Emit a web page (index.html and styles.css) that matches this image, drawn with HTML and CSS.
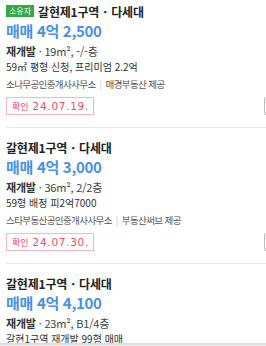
FILE: index.html
```html
<!DOCTYPE html>
<html lang="ko">
<head>
    <meta charset="UTF-8">
    <meta name="viewport" content="width=device-width, initial-scale=1.0">
    <title>매물 목록</title>
    <link rel="stylesheet" href="styles.css">
</head>
<body>
    <ul class="list">
        <li class="item">
            <div class="title"><span class="badge">소유자</span>갈현제1구역 · 다세대</div>
            <div class="price">매매 4억 2,500</div>
            <div class="info"><strong>재개발</strong> · 19m², -/-층</div>
            <div class="desc">59㎡ 평형 신청, 프리미엄 2.2억</div>
            <div class="agency">소나무공인중개사사무소<span class="bar">|</span>매경부동산 제공</div>
            <div class="bottom">
                <span class="confirm"><em>확인</em> 24.07.19.</span>
                <button class="more" aria-label="더보기"></button>
            </div>
        </li>
        <li class="item">
            <div class="title">갈현제1구역 · 다세대</div>
            <div class="price">매매 4억 3,000</div>
            <div class="info"><strong>재개발</strong> · 36m², 2/2층</div>
            <div class="desc">59형 배정 피2억7000</div>
            <div class="agency">스타부동산공인중개사사무소<span class="bar">|</span>부동산써브 제공</div>
            <div class="bottom">
                <span class="confirm"><em>확인</em> 24.07.30.</span>
                <button class="more" aria-label="더보기"></button>
            </div>
        </li>
        <li class="item">
            <div class="title">갈현제1구역 · 다세대</div>
            <div class="price">매매 4억 4,100</div>
            <div class="info"><strong>재개발</strong> · 23m², B1/4층</div>
            <div class="desc">갈현1구역 재개발 99형 매매</div>
        </li>
    </ul>
    <div class="tabbar"></div>
</body>
</html>
```

FILE: styles.css
```css
body {
    margin: 0;
    background: #fff;
    font-family: "Noto Sans CJK KR", "Noto Sans", sans-serif;
    color: #222;
    overflow: hidden;
}

.list {
    list-style: none;
    margin: -8px 0 0 6px;
    padding: 0;
}

.item {
    padding: 10px 0 12px 0;
    border-bottom: 1px solid #e6e6e6;
}

.title {
    display: flex;
    align-items: center;
    height: 18px;
    font-size: 12px;
    font-weight: bold;
    letter-spacing: -0.2px;
    word-spacing: 1px;
    color: #222;
}

.badge {
    display: inline-block;
    margin-right: 4px;
    padding: 0 3px;
    height: 12px;
    line-height: 12px;
    font-size: 8px;
    font-weight: normal;
    letter-spacing: 0;
    word-spacing: 0;
    color: #fff;
    background-color: #36a845;
}

.price {
    margin-top: 1px;
    font-size: 15px;
    line-height: 20px;
    font-weight: bold;
    letter-spacing: -0.3px;
    color: #4b8fe6;
}

.info {
    margin-top: 3px;
    font-size: 11px;
    line-height: 15px;
    letter-spacing: -0.2px;
    color: #444;
}

.info strong {
    color: #333;
}

.desc {
    font-size: 10px;
    line-height: 15px;
    color: #333;
}

.agency {
    margin-top: 3px;
    font-size: 9.5px;
    line-height: 14px;
    letter-spacing: -0.6px;
    color: #555;
}

.bar {
    margin: 0 4px;
    color: #ccc;
}

.bottom {
    display: flex;
    justify-content: space-between;
    margin-top: 6px;
}

.confirm {
    display: inline-block;
    height: 16px;
    line-height: 16px;
    padding: 0 4px 0 5px;
    border: 1px solid #f6b6c1;
    font-family: "DejaVu Sans", "Noto Sans CJK KR", sans-serif;
    font-size: 10.5px;
    letter-spacing: 0.7px;
    color: #ee4d66;
}

.confirm em {
    font-family: "Noto Sans CJK KR", sans-serif;
    font-style: normal;
    font-size: 9px;
    letter-spacing: 0;
}

.more {
    width: 40px;
    height: 18px;
    margin-right: -38px;
    padding: 0;
    border: 1px solid #bbb;
    border-radius: 2px;
    background: #fff;
}

.tabbar {
    position: fixed;
    left: 0;
    right: 0;
    bottom: 0;
    height: 3px;
    background: linear-gradient(#d8d8d8, #f0f0f0);
}
```
